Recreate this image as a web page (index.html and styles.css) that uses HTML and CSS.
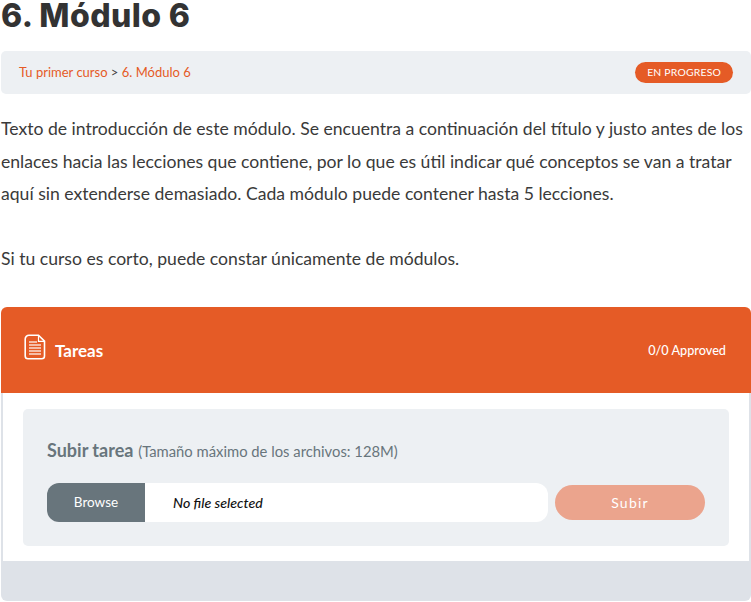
FILE: index.html
```html
<!DOCTYPE html>
<html lang="es">
<head>
  <meta charset="UTF-8" />
  <title>6. Módulo 6</title>
  <link rel="stylesheet" href="styles.css">
</head>
<body>
  <h1>6. Módulo 6</h1>

  <div class="breadcrumb">
    <div class="crumbs">
      <a href="#">Tu primer curso</a> &gt; <a href="#">6. Módulo 6</a>
    </div>
    <span class="status">EN PROGRESO</span>
  </div>

  <div class="intro">
    <p>Texto de introducción de este módulo. Se encuentra a continuación del título y justo antes de los enlaces hacia las lecciones que contiene, por lo que es útil indicar qué conceptos se van a tratar aquí sin extenderse demasiado. Cada módulo puede contener hasta 5 lecciones.</p>
    <p>Si tu curso es corto, puede constar únicamente de módulos.</p>
  </div>

  <div class="card">
    <div class="card-head">
      <div class="card-title">
        <svg class="doc-icon" width="22" height="26" viewBox="0 0 22 26" fill="none" stroke="#fff">
          <path d="M5 1.2h9.5l6 6V22a2.8 2.8 0 0 1-2.8 2.8H4A2.8 2.8 0 0 1 1.2 22V5A3.8 3.8 0 0 1 5 1.2z" stroke-width="1.6" />
          <path d="M14.5 1.5v5.8h5.8" stroke-width="1.2" />
          <path d="M5 8h8M5 11h12M5 14h12M5 17h12M5 20h12" stroke-width="1.3" opacity="0.8" />
        </svg>
        <span>Tareas</span>
      </div>
      <div class="approved">0/0 Approved</div>
    </div>

    <div class="card-body">
      <div class="upload-box">
        <div class="upload-title">
          <strong>Subir tarea</strong> <span>(Tamaño máximo de los archivos: 128M)</span>
        </div>
        <div class="upload-row">
          <div class="file-input">
            <span class="browse">Browse</span>
            <span class="file-name">No file selected</span>
          </div>
          <button class="submit">Subir</button>
        </div>
      </div>
    </div>

    <div class="card-foot"></div>
  </div>
</body>
</html>
```

FILE: styles.css
```css
* {
  box-sizing: border-box;
  margin: 0;
  padding: 0;
}

html, body {
  height: 100%;
  background: #fff;
  overflow: hidden;
}

body {
  padding-left: 1px;
  font-family: 'Lato', 'Open Sans', sans-serif;
  color: #333;
}

h1 {
  height: 51px;
  font-family: 'Inter', sans-serif;
  font-size: 32px;
  font-weight: 800;
  line-height: 31px;
  letter-spacing: 0.4px;
  color: #333;
}

.breadcrumb {
  display: flex;
  align-items: center;
  justify-content: space-between;
  height: 43px;
  padding: 0 18px;
  background: #edf0f3;
  border-radius: 5px;
  font-size: 13px;
  color: #444;
}

.crumbs {
  margin-bottom: 2px;
}

.crumbs a {
  color: #e55b26;
  text-decoration: none;
}

.status {
  padding: 0 12px;
  height: 21px;
  line-height: 21px;
  border-radius: 11px;
  background: #e55b26;
  color: #fff;
  font-size: 10.4px;
  letter-spacing: 0.2px;
}

.intro {
  padding-top: 19px;
  font-size: 17.6px;
  line-height: 32.5px;
  color: #3a3a3a;
}

.intro p {
  margin-bottom: 32px;
}

.card {
  border-radius: 6px;
  overflow: hidden;
}

.card-head {
  display: flex;
  align-items: center;
  justify-content: space-between;
  height: 86px;
  padding: 0 25px 0 23px;
  background: #e55b26;
  color: #fff;
}

.card-title {
  display: flex;
  align-items: center;
  gap: 9px;
  font-size: 17px;
  font-weight: 700;
}

.doc-icon {
  margin-top: -6px;
}

.approved {
  font-size: 12.7px;
  font-weight: 500;
}

.card-body {
  padding: 16px 20px 15px;
  background: #fff;
  border-left: 2px solid #dee2e8;
  border-right: 2px solid #dee2e8;
}

.upload-box {
  height: 137px;
  padding: 29px 24px 0;
  background: #edf0f3;
  border-radius: 5px;
}

.upload-title {
  font-size: 14.8px;
  line-height: 24px;
  color: #68757c;
}

.upload-title strong {
  font-size: 18px;
  margin-right: 1px;
}

.upload-row {
  display: flex;
  align-items: center;
  gap: 7px;
  margin-top: 20px;
}

.file-input {
  display: flex;
  align-items: center;
  width: 501px;
  height: 39px;
  background: #fff;
  border-radius: 12px;
  overflow: hidden;
}

.browse {
  width: 98px;
  height: 100%;
  line-height: 39px;
  text-align: center;
  background: #68757c;
  color: #fff;
  font-size: 13.5px;
}

.file-name {
  padding-left: 28px;
  font-size: 14.2px;
  font-style: italic;
  font-weight: 500;
  color: #111;
}

.submit {
  width: 150px;
  height: 35px;
  border: none;
  border-radius: 18px;
  background: #eba48d;
  color: #fff;
  font-family: inherit;
  font-size: 14px;
  letter-spacing: 1.2px;
}

.card-foot {
  height: 40px;
  background: #dee2e8;
}
```
